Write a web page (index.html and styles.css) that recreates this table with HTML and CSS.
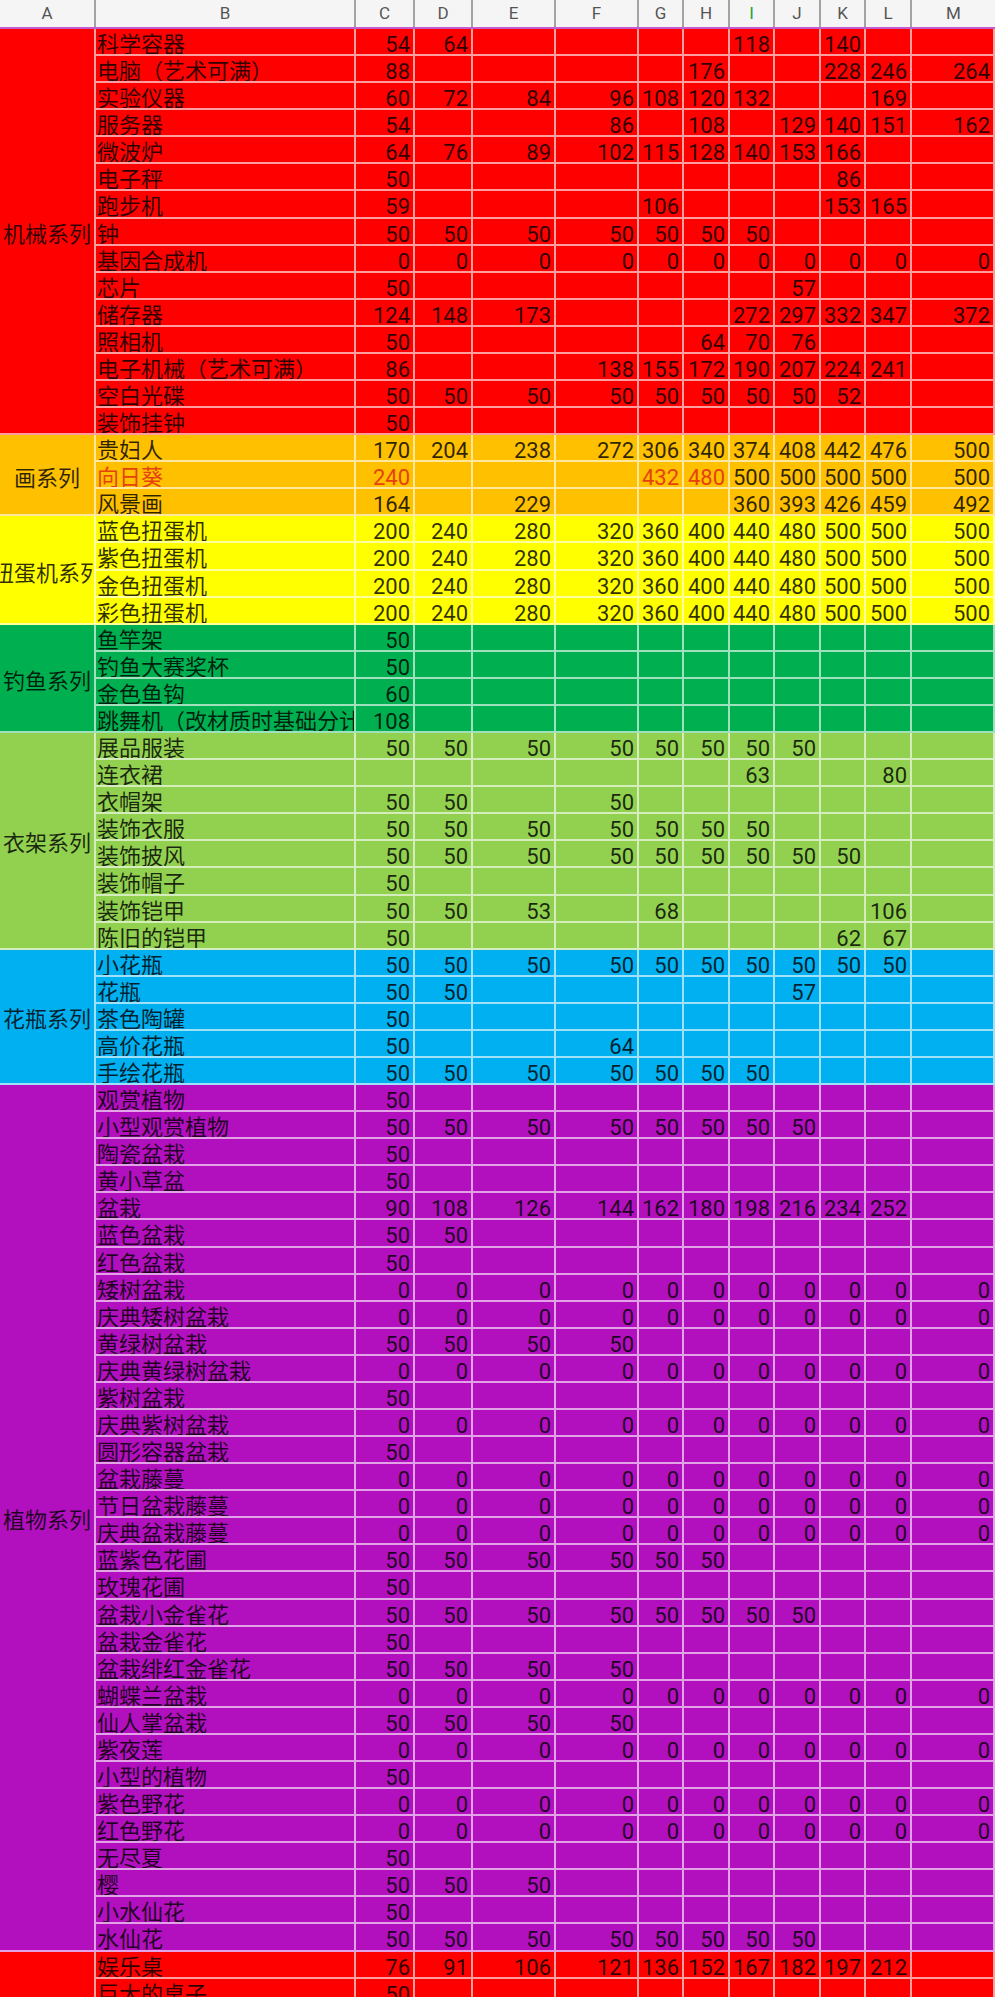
FILE: index.html
```html
<!DOCTYPE html>
<html lang="zh-CN">
<head>
<meta charset="utf-8">
<title>Sheet</title>
<link rel="stylesheet" href="styles.css">
</head>
<body>
<div class="sheet">
  <div class="head">
    <div>A</div><div>B</div><div>C</div><div>D</div><div>E</div><div>F</div><div>G</div><div>H</div><div class="sel">I</div><div>J</div><div>K</div><div>L</div><div>M</div>
  </div>
  <div class="body">
    <div class="grp red">
      <div class="cat s15">机械系列</div>
      <div class="row"><div class="t">科学容器</div><div>54</div><div>64</div><div></div><div></div><div></div><div></div><div>118</div><div></div><div>140</div><div></div><div></div></div>
      <div class="row"><div class="t">电脑（艺术可满）</div><div>88</div><div></div><div></div><div></div><div></div><div>176</div><div></div><div></div><div>228</div><div>246</div><div>264</div></div>
      <div class="row"><div class="t">实验仪器</div><div>60</div><div>72</div><div>84</div><div>96</div><div>108</div><div>120</div><div>132</div><div></div><div></div><div>169</div><div></div></div>
      <div class="row"><div class="t">服务器</div><div>54</div><div></div><div></div><div>86</div><div></div><div>108</div><div></div><div>129</div><div>140</div><div>151</div><div>162</div></div>
      <div class="row"><div class="t">微波炉</div><div>64</div><div>76</div><div>89</div><div>102</div><div>115</div><div>128</div><div>140</div><div>153</div><div>166</div><div></div><div></div></div>
      <div class="row"><div class="t">电子秤</div><div>50</div><div></div><div></div><div></div><div></div><div></div><div></div><div></div><div>86</div><div></div><div></div></div>
      <div class="row"><div class="t">跑步机</div><div>59</div><div></div><div></div><div></div><div>106</div><div></div><div></div><div></div><div>153</div><div>165</div><div></div></div>
      <div class="row"><div class="t">钟</div><div>50</div><div>50</div><div>50</div><div>50</div><div>50</div><div>50</div><div>50</div><div></div><div></div><div></div><div></div></div>
      <div class="row"><div class="t">基因合成机</div><div>0</div><div>0</div><div>0</div><div>0</div><div>0</div><div>0</div><div>0</div><div>0</div><div>0</div><div>0</div><div>0</div></div>
      <div class="row"><div class="t">芯片</div><div>50</div><div></div><div></div><div></div><div></div><div></div><div></div><div>57</div><div></div><div></div><div></div></div>
      <div class="row"><div class="t">储存器</div><div>124</div><div>148</div><div>173</div><div></div><div></div><div></div><div>272</div><div>297</div><div>332</div><div>347</div><div>372</div></div>
      <div class="row"><div class="t">照相机</div><div>50</div><div></div><div></div><div></div><div></div><div>64</div><div>70</div><div>76</div><div></div><div></div><div></div></div>
      <div class="row"><div class="t">电子机械（艺术可满）</div><div>86</div><div></div><div></div><div>138</div><div>155</div><div>172</div><div>190</div><div>207</div><div>224</div><div>241</div><div></div></div>
      <div class="row"><div class="t">空白光碟</div><div>50</div><div>50</div><div>50</div><div>50</div><div>50</div><div>50</div><div>50</div><div>50</div><div>52</div><div></div><div></div></div>
      <div class="row"><div class="t">装饰挂钟</div><div>50</div><div></div><div></div><div></div><div></div><div></div><div></div><div></div><div></div><div></div><div></div></div>
    </div>
    <div class="grp orange">
      <div class="cat s3">画系列</div>
      <div class="row"><div class="t">贵妇人</div><div>170</div><div>204</div><div>238</div><div>272</div><div>306</div><div>340</div><div>374</div><div>408</div><div>442</div><div>476</div><div>500</div></div>
      <div class="row"><div class="t hot">向日葵</div><div class="hot">240</div><div></div><div></div><div></div><div class="hot">432</div><div class="hot">480</div><div>500</div><div>500</div><div>500</div><div>500</div><div>500</div></div>
      <div class="row"><div class="t">风景画</div><div>164</div><div></div><div>229</div><div></div><div></div><div></div><div>360</div><div>393</div><div>426</div><div>459</div><div>492</div></div>
    </div>
    <div class="grp yellow">
      <div class="cat s4">扭蛋机系列</div>
      <div class="row"><div class="t">蓝色扭蛋机</div><div>200</div><div>240</div><div>280</div><div>320</div><div>360</div><div>400</div><div>440</div><div>480</div><div>500</div><div>500</div><div>500</div></div>
      <div class="row"><div class="t">紫色扭蛋机</div><div>200</div><div>240</div><div>280</div><div>320</div><div>360</div><div>400</div><div>440</div><div>480</div><div>500</div><div>500</div><div>500</div></div>
      <div class="row"><div class="t">金色扭蛋机</div><div>200</div><div>240</div><div>280</div><div>320</div><div>360</div><div>400</div><div>440</div><div>480</div><div>500</div><div>500</div><div>500</div></div>
      <div class="row"><div class="t">彩色扭蛋机</div><div>200</div><div>240</div><div>280</div><div>320</div><div>360</div><div>400</div><div>440</div><div>480</div><div>500</div><div>500</div><div>500</div></div>
    </div>
    <div class="grp green">
      <div class="cat s4">钓鱼系列</div>
      <div class="row"><div class="t">鱼竿架</div><div>50</div><div></div><div></div><div></div><div></div><div></div><div></div><div></div><div></div><div></div><div></div></div>
      <div class="row"><div class="t">钓鱼大赛奖杯</div><div>50</div><div></div><div></div><div></div><div></div><div></div><div></div><div></div><div></div><div></div><div></div></div>
      <div class="row"><div class="t">金色鱼钩</div><div>60</div><div></div><div></div><div></div><div></div><div></div><div></div><div></div><div></div><div></div><div></div></div>
      <div class="row"><div class="t">跳舞机（改材质时基础分计算）</div><div>108</div><div></div><div></div><div></div><div></div><div></div><div></div><div></div><div></div><div></div><div></div></div>
    </div>
    <div class="grp lime">
      <div class="cat s8">衣架系列</div>
      <div class="row"><div class="t">展品服装</div><div>50</div><div>50</div><div>50</div><div>50</div><div>50</div><div>50</div><div>50</div><div>50</div><div></div><div></div><div></div></div>
      <div class="row"><div class="t">连衣裙</div><div></div><div></div><div></div><div></div><div></div><div></div><div>63</div><div></div><div></div><div>80</div><div></div></div>
      <div class="row"><div class="t">衣帽架</div><div>50</div><div>50</div><div></div><div>50</div><div></div><div></div><div></div><div></div><div></div><div></div><div></div></div>
      <div class="row"><div class="t">装饰衣服</div><div>50</div><div>50</div><div>50</div><div>50</div><div>50</div><div>50</div><div>50</div><div></div><div></div><div></div><div></div></div>
      <div class="row"><div class="t">装饰披风</div><div>50</div><div>50</div><div>50</div><div>50</div><div>50</div><div>50</div><div>50</div><div>50</div><div>50</div><div></div><div></div></div>
      <div class="row"><div class="t">装饰帽子</div><div>50</div><div></div><div></div><div></div><div></div><div></div><div></div><div></div><div></div><div></div><div></div></div>
      <div class="row"><div class="t">装饰铠甲</div><div>50</div><div>50</div><div>53</div><div></div><div>68</div><div></div><div></div><div></div><div></div><div>106</div><div></div></div>
      <div class="row"><div class="t">陈旧的铠甲</div><div>50</div><div></div><div></div><div></div><div></div><div></div><div></div><div></div><div>62</div><div>67</div><div></div></div>
    </div>
    <div class="grp blue">
      <div class="cat s5">花瓶系列</div>
      <div class="row"><div class="t">小花瓶</div><div>50</div><div>50</div><div>50</div><div>50</div><div>50</div><div>50</div><div>50</div><div>50</div><div>50</div><div>50</div><div></div></div>
      <div class="row"><div class="t">花瓶</div><div>50</div><div>50</div><div></div><div></div><div></div><div></div><div></div><div>57</div><div></div><div></div><div></div></div>
      <div class="row"><div class="t">茶色陶罐</div><div>50</div><div></div><div></div><div></div><div></div><div></div><div></div><div></div><div></div><div></div><div></div></div>
      <div class="row"><div class="t">高价花瓶</div><div>50</div><div></div><div></div><div>64</div><div></div><div></div><div></div><div></div><div></div><div></div><div></div></div>
      <div class="row"><div class="t">手绘花瓶</div><div>50</div><div>50</div><div>50</div><div>50</div><div>50</div><div>50</div><div>50</div><div></div><div></div><div></div><div></div></div>
    </div>
    <div class="grp purple">
      <div class="cat s32">植物系列</div>
      <div class="row"><div class="t">观赏植物</div><div>50</div><div></div><div></div><div></div><div></div><div></div><div></div><div></div><div></div><div></div><div></div></div>
      <div class="row"><div class="t">小型观赏植物</div><div>50</div><div>50</div><div>50</div><div>50</div><div>50</div><div>50</div><div>50</div><div>50</div><div></div><div></div><div></div></div>
      <div class="row"><div class="t">陶瓷盆栽</div><div>50</div><div></div><div></div><div></div><div></div><div></div><div></div><div></div><div></div><div></div><div></div></div>
      <div class="row"><div class="t">黄小草盆</div><div>50</div><div></div><div></div><div></div><div></div><div></div><div></div><div></div><div></div><div></div><div></div></div>
      <div class="row"><div class="t">盆栽</div><div>90</div><div>108</div><div>126</div><div>144</div><div>162</div><div>180</div><div>198</div><div>216</div><div>234</div><div>252</div><div></div></div>
      <div class="row"><div class="t">蓝色盆栽</div><div>50</div><div>50</div><div></div><div></div><div></div><div></div><div></div><div></div><div></div><div></div><div></div></div>
      <div class="row"><div class="t">红色盆栽</div><div>50</div><div></div><div></div><div></div><div></div><div></div><div></div><div></div><div></div><div></div><div></div></div>
      <div class="row"><div class="t">矮树盆栽</div><div>0</div><div>0</div><div>0</div><div>0</div><div>0</div><div>0</div><div>0</div><div>0</div><div>0</div><div>0</div><div>0</div></div>
      <div class="row"><div class="t">庆典矮树盆栽</div><div>0</div><div>0</div><div>0</div><div>0</div><div>0</div><div>0</div><div>0</div><div>0</div><div>0</div><div>0</div><div>0</div></div>
      <div class="row"><div class="t">黄绿树盆栽</div><div>50</div><div>50</div><div>50</div><div>50</div><div></div><div></div><div></div><div></div><div></div><div></div><div></div></div>
      <div class="row"><div class="t">庆典黄绿树盆栽</div><div>0</div><div>0</div><div>0</div><div>0</div><div>0</div><div>0</div><div>0</div><div>0</div><div>0</div><div>0</div><div>0</div></div>
      <div class="row"><div class="t">紫树盆栽</div><div>50</div><div></div><div></div><div></div><div></div><div></div><div></div><div></div><div></div><div></div><div></div></div>
      <div class="row"><div class="t">庆典紫树盆栽</div><div>0</div><div>0</div><div>0</div><div>0</div><div>0</div><div>0</div><div>0</div><div>0</div><div>0</div><div>0</div><div>0</div></div>
      <div class="row"><div class="t">圆形容器盆栽</div><div>50</div><div></div><div></div><div></div><div></div><div></div><div></div><div></div><div></div><div></div><div></div></div>
      <div class="row"><div class="t">盆栽藤蔓</div><div>0</div><div>0</div><div>0</div><div>0</div><div>0</div><div>0</div><div>0</div><div>0</div><div>0</div><div>0</div><div>0</div></div>
      <div class="row"><div class="t">节日盆栽藤蔓</div><div>0</div><div>0</div><div>0</div><div>0</div><div>0</div><div>0</div><div>0</div><div>0</div><div>0</div><div>0</div><div>0</div></div>
      <div class="row"><div class="t">庆典盆栽藤蔓</div><div>0</div><div>0</div><div>0</div><div>0</div><div>0</div><div>0</div><div>0</div><div>0</div><div>0</div><div>0</div><div>0</div></div>
      <div class="row"><div class="t">蓝紫色花圃</div><div>50</div><div>50</div><div>50</div><div>50</div><div>50</div><div>50</div><div></div><div></div><div></div><div></div><div></div></div>
      <div class="row"><div class="t">玫瑰花圃</div><div>50</div><div></div><div></div><div></div><div></div><div></div><div></div><div></div><div></div><div></div><div></div></div>
      <div class="row"><div class="t">盆栽小金雀花</div><div>50</div><div>50</div><div>50</div><div>50</div><div>50</div><div>50</div><div>50</div><div>50</div><div></div><div></div><div></div></div>
      <div class="row"><div class="t">盆栽金雀花</div><div>50</div><div></div><div></div><div></div><div></div><div></div><div></div><div></div><div></div><div></div><div></div></div>
      <div class="row"><div class="t">盆栽绯红金雀花</div><div>50</div><div>50</div><div>50</div><div>50</div><div></div><div></div><div></div><div></div><div></div><div></div><div></div></div>
      <div class="row"><div class="t">蝴蝶兰盆栽</div><div>0</div><div>0</div><div>0</div><div>0</div><div>0</div><div>0</div><div>0</div><div>0</div><div>0</div><div>0</div><div>0</div></div>
      <div class="row"><div class="t">仙人掌盆栽</div><div>50</div><div>50</div><div>50</div><div>50</div><div></div><div></div><div></div><div></div><div></div><div></div><div></div></div>
      <div class="row"><div class="t">紫夜莲</div><div>0</div><div>0</div><div>0</div><div>0</div><div>0</div><div>0</div><div>0</div><div>0</div><div>0</div><div>0</div><div>0</div></div>
      <div class="row"><div class="t">小型的植物</div><div>50</div><div></div><div></div><div></div><div></div><div></div><div></div><div></div><div></div><div></div><div></div></div>
      <div class="row"><div class="t">紫色野花</div><div>0</div><div>0</div><div>0</div><div>0</div><div>0</div><div>0</div><div>0</div><div>0</div><div>0</div><div>0</div><div>0</div></div>
      <div class="row"><div class="t">红色野花</div><div>0</div><div>0</div><div>0</div><div>0</div><div>0</div><div>0</div><div>0</div><div>0</div><div>0</div><div>0</div><div>0</div></div>
      <div class="row"><div class="t">无尽夏</div><div>50</div><div></div><div></div><div></div><div></div><div></div><div></div><div></div><div></div><div></div><div></div></div>
      <div class="row"><div class="t">樱</div><div>50</div><div>50</div><div>50</div><div></div><div></div><div></div><div></div><div></div><div></div><div></div><div></div></div>
      <div class="row"><div class="t">小水仙花</div><div>50</div><div></div><div></div><div></div><div></div><div></div><div></div><div></div><div></div><div></div><div></div></div>
      <div class="row"><div class="t">水仙花</div><div>50</div><div>50</div><div>50</div><div>50</div><div>50</div><div>50</div><div>50</div><div>50</div><div></div><div></div><div></div></div>
    </div>
    <div class="grp red">
      <div class="cat s2"></div>
      <div class="row"><div class="t">娱乐桌</div><div>76</div><div>91</div><div>106</div><div>121</div><div>136</div><div>152</div><div>167</div><div>182</div><div>197</div><div>212</div><div></div></div>
      <div class="row"><div class="t">巨大的桌子</div><div>50</div><div></div><div></div><div></div><div></div><div></div><div></div><div></div><div></div><div></div><div></div></div>
    </div>
  </div>
</div>
</body>
</html>
```
FILE: styles.css
```css
html, body {
  margin: 0;
  padding: 0;
  background: #ffffff;
  overflow: hidden;
}

.sheet {
  width: 995px;
  font-family: Roboto, "Noto Sans CJK SC", sans-serif;
  font-size: 22px;
}

.head,
.body {
  display: grid;
  grid-template-columns: 96px 260px 59px 58px 83px 83px 45px 46px 45px 46px 45px 46px 83px;
}

.head {
  height: 29px;
  box-sizing: border-box;
  background: #f5f5f5;
  border-bottom: 2px solid #c65bcd;
}

.head > div {
  border-right: 2px solid #a3a3a3;
  text-align: center;
  line-height: 27px;
  font-size: 17px;
  color: #555555;
}

.head > div:last-child {
  border-right: none;
}

.head > .sel {
  color: #2f9e3f;
}

.body {
  grid-auto-rows: 27.09px;
}

.grp,
.row {
  display: contents;
}

.red { --bg: #ff0000; }
.orange { --bg: #ffc000; }
.yellow { --bg: #ffff00; }
.green { --bg: #00b050; }
.lime { --bg: #92d050; }
.blue { --bg: #00b0f0; }
.purple { --bg: #b20fbe; }

.cat,
.row > div {
  --line: rgba(255, 255, 255, 0.62);
  background: var(--bg);
  border-right: 2px solid var(--line);
  border-bottom: 2px solid var(--line);
  box-sizing: border-box;
  overflow: hidden;
  white-space: nowrap;
  color: rgba(0, 0, 0, 0.82);
}

.row > div {
  text-align: right;
  padding: 4px 3px 0 0;
  line-height: 24px;
}

.row > .t {
  text-align: left;
  padding-left: 1px;
  padding-right: 0;
}

.row > .hot {
  color: #e5420f;
}

.cat {
  grid-column: 1;
  display: flex;
  align-items: center;
  justify-content: center;
  padding-top: 2px;
}

.s2 { grid-row: span 2; }
.s3 { grid-row: span 3; }
.s4 { grid-row: span 4; }
.s5 { grid-row: span 5; }
.s8 { grid-row: span 8; }
.s15 { grid-row: span 15; }
.s32 { grid-row: span 32; }
```
